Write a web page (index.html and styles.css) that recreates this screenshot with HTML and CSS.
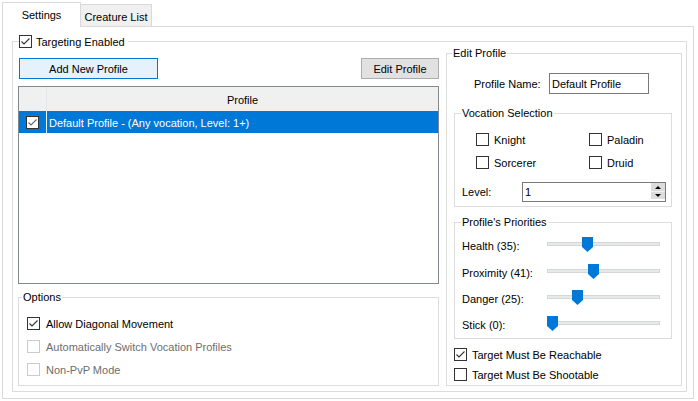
FILE: index.html
```html
<!DOCTYPE html>
<html lang="en">
<head>
<meta charset="utf-8">
<title>Targeting Settings</title>
<link rel="stylesheet" href="styles.css">
</head>
<body>
<div class="window">
  <div class="tabs">
    <div class="tab tab-active">Settings</div>
    <div class="tab tab-other">Creature List</div>
  </div>
  <div class="page">
    <div class="group group-targeting">
      <div class="legend legend-check">
        <span class="cb"><svg width="11" height="11" viewBox="0 0 11 11"><path d="M1.5 5.5 L4 8 L9.5 2.5" fill="none" stroke="#333" stroke-width="1.1"/></svg></span>
        <span>Targeting Enabled</span>
      </div>
      <div class="cols">
        <div class="col-left">
          <div class="btn-row">
            <div class="btn btn-primary">Add New Profile</div>
            <div class="btn btn-edit">Edit Profile</div>
          </div>
          <div class="list">
            <div class="list-head">
              <div class="col-check"></div>
              <div class="col-name">Profile</div>
            </div>
            <div class="list-row is-selected">
              <div class="col-check"><span class="cb"><svg width="11" height="11" viewBox="0 0 11 11"><path d="M1.5 5.5 L4 8 L9.5 2.5" fill="none" stroke="#666" stroke-width="1.1"/></svg></span></div>
              <div class="col-name">Default Profile - (Any vocation, Level: 1+)</div>
            </div>
          </div>
          <div class="group group-options">
            <div class="legend legend-options">Options</div>
            <div class="opt-list">
              <div class="chk chk-opt"><span class="cb"><svg width="11" height="11" viewBox="0 0 11 11"><path d="M1.5 5.5 L4 8 L9.5 2.5" fill="none" stroke="#333" stroke-width="1.1"/></svg></span>Allow Diagonal Movement</div>
              <div class="chk chk-opt is-disabled"><span class="cb"></span>Automatically Switch Vocation Profiles</div>
              <div class="chk chk-opt is-disabled"><span class="cb"></span>Non-PvP Mode</div>
            </div>
          </div>
        </div>
        <div class="group group-edit">
          <div class="legend legend-edit">Edit Profile</div>
          <div class="name-row">
            <span class="name-label">Profile Name:</span>
            <div class="textbox">Default Profile</div>
          </div>
          <div class="group group-voc">
            <div class="legend legend-sub">Vocation Selection</div>
            <div class="voc-grid">
              <div class="chk"><span class="cb"></span>Knight</div>
              <div class="chk"><span class="cb"></span>Paladin</div>
              <div class="chk"><span class="cb"></span>Sorcerer</div>
              <div class="chk"><span class="cb"></span>Druid</div>
            </div>
            <div class="level-row">
              <span class="level-label">Level:</span>
              <div class="spin">
                <span class="spin-val">1</span>
                <div class="spin-btns">
                  <span class="spin-btn"><span class="arrow-up"></span></span>
                  <span class="spin-btn"><span class="arrow-down"></span></span>
                </div>
              </div>
            </div>
          </div>
          <div class="group group-prio">
            <div class="legend legend-sub">Profile's Priorities</div>
            <div class="slider-row">
              <span class="slider-label">Health (35):</span>
              <div class="slider"><div class="track"></div><svg class="thumb" style="left:35px" width="11" height="15" viewBox="0 0 11 15"><path d="M0 0H11V10L5.5 15L0 10Z" fill="#0078d7"/></svg></div>
            </div>
            <div class="slider-row">
              <span class="slider-label">Proximity (41):</span>
              <div class="slider"><div class="track"></div><svg class="thumb" style="left:41px" width="11" height="15" viewBox="0 0 11 15"><path d="M0 0H11V10L5.5 15L0 10Z" fill="#0078d7"/></svg></div>
            </div>
            <div class="slider-row">
              <span class="slider-label">Danger (25):</span>
              <div class="slider"><div class="track"></div><svg class="thumb" style="left:25px" width="11" height="15" viewBox="0 0 11 15"><path d="M0 0H11V10L5.5 15L0 10Z" fill="#0078d7"/></svg></div>
            </div>
            <div class="slider-row">
              <span class="slider-label">Stick (0):</span>
              <div class="slider"><div class="track"></div><svg class="thumb" style="left:0px" width="11" height="15" viewBox="0 0 11 15"><path d="M0 0H11V10L5.5 15L0 10Z" fill="#0078d7"/></svg></div>
            </div>
          </div>
          <div class="chk chk-reach"><span class="cb"><svg width="11" height="11" viewBox="0 0 11 11"><path d="M1.5 5.5 L4 8 L9.5 2.5" fill="none" stroke="#333" stroke-width="1.1"/></svg></span>Target Must Be Reachable</div>
          <div class="chk chk-shoot"><span class="cb"></span>Target Must Be Shootable</div>
        </div>
      </div>
    </div>
  </div>
</div>
</body>
</html>
```
FILE: styles.css
```css
* { box-sizing: border-box; }
html, body { margin: 0; padding: 0; }
body {
  width: 698px;
  height: 401px;
  overflow: hidden;
  background: #fff;
  font-family: "Liberation Sans", Arial, sans-serif;
  font-size: 11px;
  color: #000;
}
.window { padding-top: 2px; }

/* tabs */
.tabs { display: flex; height: 24px; padding-left: 2px; }
.tab {
  display: flex;
  align-items: center;
  justify-content: center;
  border: 1px solid #d9d9d9;
  border-bottom: none;
  white-space: nowrap;
}
.tab-active {
  width: 79px;
  height: 25px;
  background: #fff;
  position: relative;
  z-index: 1;
  padding-bottom: 1px;
}
.tab-other {
  width: 72px;
  height: 22px;
  margin-top: 2px;
  margin-left: -1px;
  background: #f0f0f0;
  padding-top: 2px;
}

.page {
  margin-left: 2px;
  width: 692px;
  height: 373px;
  border: 1px solid #d9d9d9;
  padding: 14px 0 0 9px;
}

/* group boxes */
.group { position: relative; border: 1px solid #dcdcdc; }
.legend {
  position: absolute;
  top: -8px;
  left: 5px;
  padding: 0 1px;
  background: #fff;
  line-height: 14px;
  white-space: nowrap;
}
.legend-check {
  top: -7px;
  left: 6px;
  padding: 0 3px 0 0;
  display: flex;
  align-items: center;
  height: 13px;
}
.legend-check .cb { margin-right: 4px; }
.legend-options { left: 3px; }
.legend-edit { left: 5px; }
.legend-sub { left: 6px; }

.group-targeting {
  width: 675px;
  height: 351px;
  padding: 11px 4px 5px 5px;
}
.cols {
  display: grid;
  grid-template-columns: 421px 236px;
  column-gap: 7px;
  height: 100%;
}
.col-left { display: flex; flex-direction: column; }

/* buttons */
.btn-row {
  display: flex;
  justify-content: space-between;
  margin-top: 5px;
  height: 21px;
}
.btn {
  height: 21px;
  border: 1px solid #adadad;
  background: #e1e1e1;
  display: flex;
  align-items: center;
  justify-content: center;
  white-space: nowrap;
}
.btn-primary {
  width: 139px;
  margin-left: 1px;
  border-color: #0078d7;
  background: #e5f1fb;
}
.btn-edit { width: 78px; }

/* list */
.list {
  margin-top: 7px;
  height: 198px;
  border: 1px solid #828790;
  background: #fff;
}
.list-head { display: flex; height: 24px; background: #f0f0f0; }
.list-head .col-check { width: 28px; border-right: 1px solid #e5e5e5; }
.col-name { flex: 1; white-space: nowrap; }
.list-head .col-name {
  display: flex;
  align-items: center;
  justify-content: center;
  padding-top: 2px;
}
.list-row { display: flex; height: 22px; }
.list-row.is-selected { background: #0078d7; color: #fff; }
.list-row .col-check {
  width: 28px;
  border-right: 1px solid #e8f2fb;
  padding: 5px 0 0 7px;
}
.list-row .col-name {
  padding: 2px 0 0 2px;
  display: flex;
  align-items: center;
}

/* checkboxes */
.chk {
  display: flex;
  align-items: center;
  height: 13px;
  white-space: nowrap;
}
.cb {
  width: 13px;
  height: 13px;
  flex: none;
  border: 1px solid #333;
  background: #fff;
  display: flex;
  margin-right: 5px;
}
.cb svg { display: block; }
.chk-opt .cb { margin-right: 6px; }
.is-disabled { color: #6d6d6d; }
.is-disabled .cb { border-color: #cccccc; }

/* options */
.group-options {
  margin-top: 13px;
  height: 89px;
  padding: 19px 0 0 8px;
}
.opt-list { display: flex; flex-direction: column; gap: 10px; }

/* edit profile */
.group-edit {
  height: 333px;
  padding: 19px 9px 0 7px;
}
.name-row { display: flex; align-items: center; height: 21px; }
.name-label { width: 95px; padding-left: 20px; white-space: nowrap; }
.textbox {
  width: 100px;
  height: 21px;
  border: 1px solid #7a7a7a;
  padding-left: 2px;
  display: flex;
  align-items: center;
  white-space: nowrap;
}

.group-voc {
  margin-top: 19px;
  height: 94px;
  padding-top: 19px;
}
.voc-grid {
  display: grid;
  grid-template-columns: 113px 1fr;
  row-gap: 10px;
  margin-left: 21px;
}
.level-row {
  display: flex;
  align-items: center;
  margin-top: 13px;
  height: 20px;
}
.level-label { width: 67px; padding-left: 7px; }
.spin {
  width: 144px;
  height: 20px;
  border: 1px solid #7a7a7a;
  display: flex;
  justify-content: space-between;
}
.spin-val { padding-left: 2px; display: flex; align-items: center; }
.spin-btns { width: 14px; display: flex; flex-direction: column; }
.spin-btn {
  height: 8px;
  background: #dcdcdc;
  display: flex;
  align-items: center;
  justify-content: center;
}
.spin-btn + .spin-btn { border-top: 1px solid #f0f0f0; height: 8px; }
.arrow-up {
  width: 0; height: 0;
  border-left: 3px solid transparent;
  border-right: 3px solid transparent;
  border-bottom: 3px solid #000;
}
.arrow-down {
  width: 0; height: 0;
  border-left: 3px solid transparent;
  border-right: 3px solid transparent;
  border-top: 3px solid #000;
}

/* priorities */
.group-prio {
  margin-top: 15px;
  height: 117px;
  padding: 14px 0 0 7px;
}
.slider-row { display: flex; height: 15px; margin-bottom: 11px; }
.slider-row:nth-child(2) { margin-bottom: 12px; }
.slider-label {
  width: 85px;
  line-height: 15px;
  padding-top: 2px;
  white-space: nowrap;
}
.slider { position: relative; width: 113px; height: 15px; }
.track {
  margin-top: 5px;
  height: 4px;
  border: 1px solid #d6d6d6;
  background: #e7eaea;
}
.thumb { position: absolute; top: 0; display: block; }

.chk-reach { margin-top: 9px; }
.chk-shoot { margin-top: 7px; }
```
